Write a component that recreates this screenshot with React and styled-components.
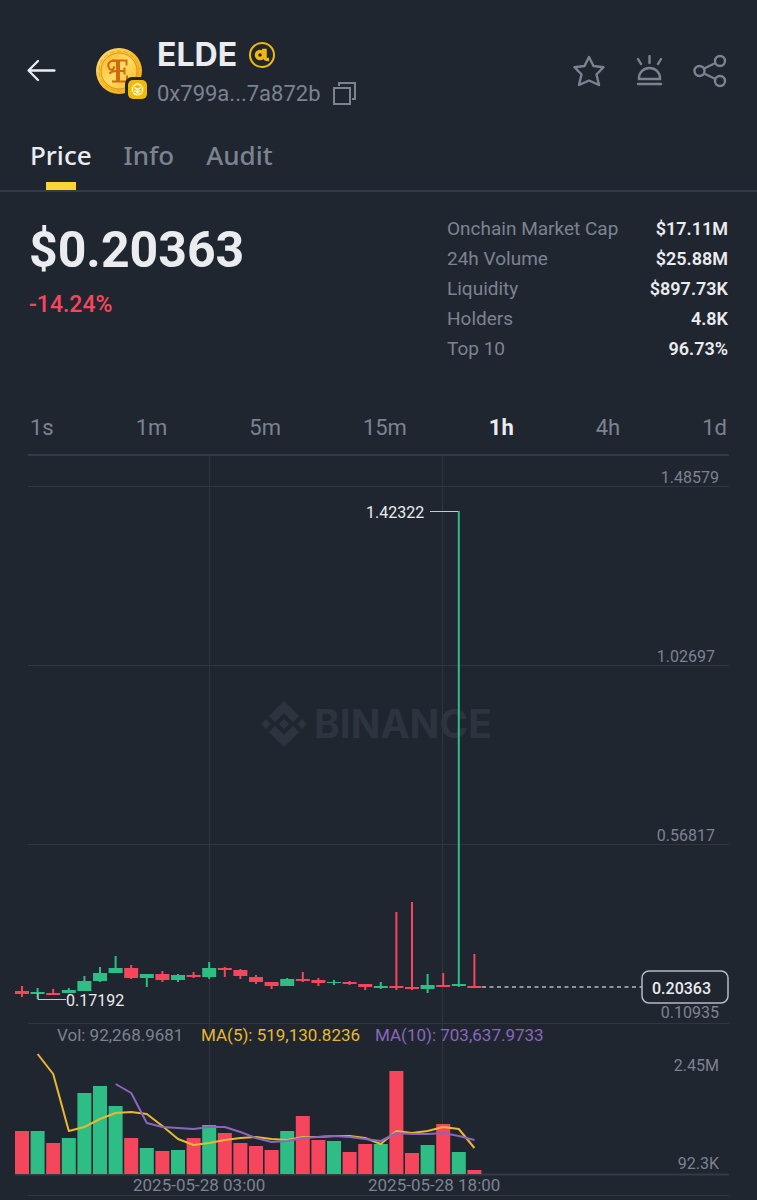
import React, { useState } from "react";
import styled, { createGlobalStyle } from "styled-components";

const c = {
  bg: "#202630",
  line: "#2f3640",
  rule: "#343b46",
  text: "#eaecef",
  muted: "#7b8391",
  up: "#2ebd85",
  down: "#f6465d",
  yellow: "#fcd535",
  gold: "#f0b90b",
  ma5: "#e8b92f",
  ma10: "#8a67bd",
};

const GlobalStyle = createGlobalStyle`
  * { box-sizing: border-box; }
  body { margin: 0; background: ${c.bg}; color: ${c.text}; font-family: Roboto, "Liberation Sans", sans-serif; }
  button { font-family: inherit; background: none; border: 0; padding: 0; margin: 0; cursor: pointer; color: inherit; }
  svg { display: block; }
`;

const Page = styled.main`
  width: 100%;
  background: ${c.bg};
`;

const Header = styled.header`
  display: flex;
  align-items: center;
  padding: 35px 30px 0 26px;
`;

const IconButton = styled.button`
  color: ${(p) => (p.$bright ? c.text : c.muted)};
  flex: none;
`;

const Identity = styled.div`
  display: flex;
  align-items: center;
  gap: 8px;
  flex: 1;
  margin-left: 40px;
`;

const NameBlock = styled.div`
  display: flex;
  flex-direction: column;
  gap: 2px;
`;

const NameLine = styled.div`
  display: flex;
  align-items: center;
  gap: 12px;
`;

const Symbol = styled.h1`
  margin: 0;
  font-family: Inter, Roboto, sans-serif;
  font-size: 32px;
  line-height: 40px;
  font-weight: 700;
`;

const Address = styled.span`
  font-size: 22px;
  line-height: 34px;
  color: ${c.muted};
`;

const Actions = styled.div`
  display: flex;
  gap: 28px;
  padding-bottom: 4px;
`;

const Tabs = styled.nav`
  display: flex;
  gap: 32px;
  padding: 0 30px;
  border-bottom: 2px solid ${c.rule};
`;

const Tab = styled.button`
  position: relative;
  height: 79px;
  padding-top: 8px;
  font-family: "Noto Sans", Roboto, sans-serif;
  font-size: 26px;
  font-weight: 500;
  color: ${(p) => (p.$active ? c.text : c.muted)};

  &::after {
    content: "";
    display: ${(p) => (p.$active ? "block" : "none")};
    position: absolute;
    bottom: 0;
    left: 50%;
    width: 30px;
    margin-left: -15px;
    height: 8px;
    background: ${c.yellow};
  }
`;

const Summary = styled.section`
  display: flex;
  justify-content: space-between;
  padding: 22px 29px 36px;
`;

const PriceBlock = styled.div`
  padding-top: 6px;
`;

const Price = styled.div`
  font-size: 50px;
  line-height: 60px;
  font-weight: 700;
`;

const Change = styled.div`
  margin-top: 10px;
  font-size: 23px;
  line-height: 30px;
  font-weight: 500;
  color: ${c.down};
`;

const Stats = styled.dl`
  margin: 0;
  width: 281px;
`;

const Stat = styled.div`
  display: flex;
  justify-content: space-between;
  font-size: 19px;
  line-height: 30px;
`;

const StatName = styled.dt`
  color: ${c.muted};
`;

const StatValue = styled.dd`
  margin: 0;
  font-size: 18px;
  font-weight: 600;
`;

const Intervals = styled.div`
  display: flex;
  justify-content: space-between;
  height: 54px;
  padding: 0 30px;
`;

const Interval = styled.button`
  font-size: 22px;
  font-weight: ${(p) => (p.$active ? 700 : 400)};
  color: ${(p) => (p.$active ? c.text : c.muted)};
`;

const Chart = styled.svg`
  width: 100%;
  height: auto;
  font-size: 17px;
`;

const stats = [
  ["Onchain Market Cap", "$17.11M"],
  ["24h Volume", "$25.88M"],
  ["Liquidity", "$897.73K"],
  ["Holders", "4.8K"],
  ["Top 10", "96.73%"],
];

// [direction, wick top, wick bottom, body top, body bottom, volume top]
const candles = [
  ["r", 986, 997, 991, 994, 1131],
  ["g", 988, 999, 992, 994, 1131],
  ["r", 989, 995, 993, 995, 1143],
  ["g", 988, 993, 990, 993, 1138],
  ["g", 976, 991, 981, 991, 1093],
  ["g", 967, 982, 973, 981, 1086],
  ["g", 956, 973, 968, 973, 1106],
  ["r", 965, 979, 968, 978, 1138],
  ["g", 974, 987, 974, 978, 1148],
  ["r", 971, 982, 974, 980, 1151],
  ["g", 974, 982, 975, 980, 1150],
  ["r", 972, 978, 975, 977, 1138],
  ["g", 962, 979, 968, 977, 1125],
  ["r", 967, 977, 968, 970, 1133],
  ["r", 969, 979, 970, 976, 1143],
  ["r", 975, 984, 977, 982, 1146],
  ["r", 982, 989, 982, 986, 1150],
  ["g", 978, 986, 979, 986, 1131],
  ["r", 972, 982, 979, 981, 1116],
  ["r", 978, 986, 980, 983, 1140],
  ["g", 980, 985, 982, 983, 1141],
  ["r", 981, 985, 982, 984, 1152],
  ["r", 984, 990, 984, 987, 1144],
  ["g", 982, 989, 986, 988, 1144],
  ["r", 912, 990, 986, 988, 1071],
  ["r", 902, 990, 987, 989, 1153],
  ["g", 974, 993, 985, 989, 1145],
  ["r", 973, 987, 985, 987, 1124],
  ["g", 511, 987, 984, 986, 1152],
  ["r", 954, 988, 986, 988, 1170],
];

const ma5 = [
  1054, 1074, 1131, 1127, 1119, 1113, 1112, 1114, 1126, 1139, 1145, 1143, 1140, 1138, 1137,
  1139, 1140, 1137, 1137, 1136, 1136, 1138, 1144, 1131, 1133, 1131, 1127, 1129, 1148,
];
const ma10 = [
  1084, 1093, 1123, 1127, 1128, 1129, 1127, 1127, 1132, 1138, 1142, 1141, 1138, 1137, 1136,
  1137, 1139, 1141, 1133, 1134, 1134, 1133, 1136, 1140,
];

const centre = (i) => 22 + (i * 78) / 5;
const path = (values, first) => values.map((y, i) => `${centre(i + first)},${y}`).join(" ");

function Coin() {
  return (
    <svg width="53" height="54" viewBox="0 0 53 54" aria-hidden="true">
      <defs>
        <linearGradient id="gold" x1="0" y1="0" x2="1" y2="1">
          <stop offset="0" stopColor="#ffe27a" />
          <stop offset="0.5" stopColor="#fbc02a" />
          <stop offset="1" stopColor="#f5a90d" />
        </linearGradient>
        <linearGradient id="face" x1="0" y1="0" x2="1" y2="1">
          <stop offset="0" stopColor="#fdbb25" />
          <stop offset="0.5" stopColor="#fedb63" />
          <stop offset="1" stopColor="#fdb61f" />
        </linearGradient>
      </defs>
      <circle cx="23" cy="25" r="23" fill="url(#gold)" />
      <circle cx="23" cy="25" r="18" fill="url(#face)" stroke="#dc8f1c" strokeWidth="1" />
      <circle cx="23" cy="25" r="20" fill="none" stroke="#e3a02c" strokeWidth="1" strokeDasharray="5 2" />
      <g fill="none" stroke="#cf6a12">
        <path d="M22 15v20" strokeWidth="4" />
        <path d="M16 14.500h14.500v5M16 35.500h15v-6M22 25h7M28.500 21.500v7" strokeWidth="2" />
        <path d="M20 15c-7-1-9 3-7 7 1 3 5 2 5-1M14 27c2-2 4-2 6-2" strokeWidth="2" strokeLinecap="round" />
      </g>
      <rect x="29" y="31" width="24" height="24" rx="7" fill={c.bg} />
      <rect x="32" y="34" width="19" height="19" rx="5" fill={c.gold} />
      <g fill="none" stroke="#fff6d5" strokeWidth="1.500">
        <path d="M41.500 37.500l5 3v6l-5 3-5-3v-6z" strokeDasharray="5 1" />
        <path d="M38.500 41.500l3 2 3-2M41.500 43v5M38.500 44.500l3 2 3-2" />
      </g>
    </svg>
  );
}

function AlphaMark() {
  return (
    <svg width="26" height="26" viewBox="0 0 26 26" role="img" aria-label="Alpha">
      <circle cx="13" cy="13" r="12" fill="none" stroke={c.gold} strokeWidth="2" />
      <circle cx="11" cy="13" r="3.500" fill="none" stroke={c.gold} strokeWidth="3.500" />
      <path d="M13 8.500h3V16q0 1.500 4 1.500" fill="none" stroke={c.gold} strokeWidth="3.500" />
    </svg>
  );
}

function PriceChart() {
  return (
    <Chart viewBox="0 454 757 746" role="img" aria-label="ELDE hourly price and volume">
      <g stroke={c.line} strokeWidth="1">
        <path d="M28 486.500H729M28 665.500H729M28 844.500H729M28 1023.500H729M209.500 455V1174M442.500 455V1174" />
        <path d="M28 1195.500H729" />
      </g>
      <path d="M28 455H729M15 1174.500H729" stroke={c.rule} strokeWidth="2" />

      <g fill="#2d343f">
        <g transform="translate(284 724)">
          <path d="M0-23L15-8l-6 6L0-11-9-2l-6-6zM0 23L15 8 9 2 0 11-9 2l-6 6z" />
          <path d="M0-5L5 0 0 5-5 0zM-18-5l5 5-5 5-5-5zM18-5l5 5-5 5-5-5z" />
        </g>
        <text x="314" y="738" fontFamily="Inter, sans-serif" fontSize="39" fontWeight="700">BINANCE</text>
      </g>

      {candles.map(([dir, wt, wb, bt, bb, vol], i) => (
        <g key={i} fill={dir === "g" ? c.up : c.down}>
          <rect x={centre(i) - 1} y={wt} width="2" height={wb - wt} />
          <rect x={centre(i) - 7} y={bt} width="14" height={bb - bt} />
          <rect x={centre(i) - 7} y={vol} width="14" height={1174 - vol} />
        </g>
      ))}
      <g fill="none" strokeWidth="2" strokeLinejoin="round">
        <polyline points={path(ma5, 1)} stroke={c.ma5} />
        <polyline points={path(ma10, 6)} stroke={c.ma10} />
      </g>

      <path d="M430 511.500H458M38 993V999.500H66" fill="none" stroke="#c5cad3" />
      <path d="M482 987H642" stroke="#b4b9c2" strokeWidth="1.500" strokeDasharray="4 3.500" />
      <rect x="642" y="971" width="86" height="32" rx="7" fill={c.bg} stroke="#b4b9c2" strokeWidth="1.500" />

      <g fill={c.text} fontSize="16">
        <text x="366" y="518">1.42322</text>
        <text x="66" y="1006">0.17192</text>
        <text x="652" y="994" fontWeight="500">0.20363</text>
      </g>
      <g fill={c.muted}>
        <g textAnchor="end" fontSize="16">
          <text x="719" y="483">1.48579</text>
          <text x="715" y="662">1.02697</text>
          <text x="715" y="841">0.56817</text>
          <text x="719" y="1018">0.10935</text>
          <text x="719" y="1071">2.45M</text>
          <text x="719" y="1169">92.3K</text>
        </g>
        <text x="57" y="1041">Vol: 92,268.9681</text>
        <text x="133" y="1191">2025-05-28 03:00</text>
        <text x="368" y="1191">2025-05-28 18:00</text>
      </g>
      <text x="201" y="1041" fill={c.ma5}>MA(5): 519,130.8236</text>
      <text x="375" y="1041" fill={c.ma10}>MA(10): 703,637.9733</text>
    </Chart>
  );
}

export default function App() {
  const [tab, setTab] = useState("Price");
  const [interval, setInterval] = useState("1h");
  return (
    <Page>
      <GlobalStyle />
      <Header>
        <IconButton $bright aria-label="Back">
          <svg width="30" height="30" viewBox="0 0 30 30" fill="none" stroke="currentColor" strokeWidth="2.300" strokeLinecap="round" strokeLinejoin="round">
            <path d="M28.500 12.500H3M12 3l-9.500 9.500L12 22" />
          </svg>
        </IconButton>
        <Identity>
          <Coin />
          <NameBlock>
            <NameLine>
              <Symbol>ELDE</Symbol>
              <AlphaMark />
            </NameLine>
            <NameLine>
              <Address>0x799a...7a872b</Address>
              <IconButton aria-label="Copy address">
                <svg width="24" height="24" viewBox="0 0 24 24" fill="none" stroke="currentColor" strokeWidth="2">
                  <path d="M1 6h16v16H1zM6 4V1h16v16h-3" />
                </svg>
              </IconButton>
            </NameLine>
          </NameBlock>
        </Identity>
        <Actions>
          <IconButton aria-label="Add to favourites">
            <svg width="32" height="32" viewBox="0 0 32 32" fill="none" stroke="currentColor" strokeWidth="2.400" strokeLinejoin="round">
              <path d="M16 2l4.500 9 10 1.200-7 7.300 2.500 10.500-10-4.500L6 30l2.500-10.500-7-7.300L11.500 11z" />
            </svg>
          </IconButton>
          <IconButton aria-label="Price alert">
            <svg width="32" height="32" viewBox="0 0 32 32" fill="none" stroke="currentColor" strokeWidth="2.400" strokeLinecap="round">
              <path d="M6 24v-1a10.500 10 0 0 1 21 0v1zM5 29h23M16.500 1v7M5 4l3 5M28 4l-3 5" />
            </svg>
          </IconButton>
          <IconButton aria-label="Share">
            <svg width="34" height="34" viewBox="0 0 34 34" fill="none" stroke="currentColor" strokeWidth="2.400">
              <circle cx="6.500" cy="17" r="5" />
              <circle cx="27" cy="7" r="5" />
              <circle cx="27" cy="27" r="5" />
              <path d="M11 14.500l11.500-5.500M11 19.500l11.500 5.500" />
            </svg>
          </IconButton>
        </Actions>
      </Header>
      <Tabs>
        {["Price", "Info", "Audit"].map((t) => (
          <Tab key={t} $active={t === tab} onClick={() => setTab(t)}>{t}</Tab>
        ))}
      </Tabs>
      <Summary>
        <PriceBlock>
          <Price>$0.20363</Price>
          <Change>-14.24%</Change>
        </PriceBlock>
        <Stats>
          {stats.map(([name, value]) => (
            <Stat key={name}>
              <StatName>{name}</StatName>
              <StatValue>{value}</StatValue>
            </Stat>
          ))}
        </Stats>
      </Summary>
      <Intervals>
        {["1s", "1m", "5m", "15m", "1h", "4h", "1d"].map((t) => (
          <Interval key={t} $active={t === interval} onClick={() => setInterval(t)}>{t}</Interval>
        ))}
      </Intervals>
      <PriceChart />
    </Page>
  );
}
